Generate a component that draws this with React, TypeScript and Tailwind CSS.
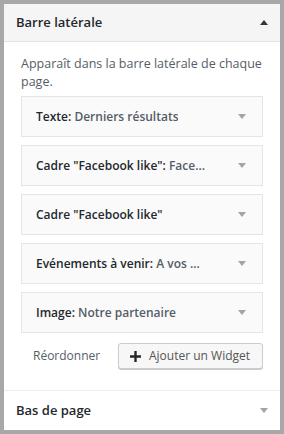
const widgets = [
  { name: "Texte", title: "Derniers résultats" },
  { name: 'Cadre "Facebook like"', title: "Face..." },
  { name: 'Cadre "Facebook like"', title: "" },
  { name: "Evénements à venir", title: "A vos ..." },
  { name: "Image", title: "Notre partenaire" },
];

function Caret({ up = false, dark = false }: { up?: boolean; dark?: boolean }) {
  return (
    <svg width="8" height="5" viewBox="0 0 8 5" className={up ? "" : "rotate-180"}>
      <path d="M0 5 L4 0 L8 5 Z" fill={dark ? "#32373c" : "#a0a5aa"} />
    </svg>
  );
}

export default function App() {
  return (
    <div className="h-[434px] w-[284px] bg-[#a8a8a8] p-[4px] font-['Open_Sans',sans-serif]">
      <div className="flex h-full flex-col bg-white">
        <div className="flex h-[38px] shrink-0 items-center justify-between border-b border-[#e2e4e7] bg-[#f5f5f5] pl-[12px] pr-[12px]">
          <span className="text-[13px] font-semibold text-[#23282d]">Barre latérale</span>
          <Caret up dark />
        </div>

        <div className="flex flex-col px-[17px] pt-[13px] pb-[21px]">
          <p className="mb-[5px] text-[12.5px] leading-[18px] text-[#555d66]">
            Apparaît dans la barre latérale de chaque page.
          </p>
          <div className="flex flex-col gap-2">
            {widgets.map((w, i) => (
              <div
                key={i}
                className="flex h-[41px] items-center justify-between border border-[#e5e5e5] bg-[#fafafa] pl-[14px] pr-[16px]"
              >
                <span className="truncate text-[12px] font-semibold text-[#23282d]">
                  {w.name}
                  {w.title && (
                    <>
                      : <span className="text-[#555d66]">{w.title}</span>
                    </>
                  )}
                </span>
                <Caret />
              </div>
            ))}
          </div>
          <div className="mt-[10px] flex items-center justify-between pl-[12px]">
            <span className="text-[12px] text-[#555d66]">Réordonner</span>
            <button className="flex h-[26px] w-[145px] items-center gap-[8px] rounded-[3px] border border-[#cccccc] bg-[#f7f7f7] pl-[11px] text-[12px] text-[#555] shadow-[0_1px_0_#cccccc]">
              <svg width="11" height="11" viewBox="0 0 12 12">
                <path d="M4.7 0h2.6v4.7H12v2.6H7.3V12H4.7V7.3H0V4.7h4.7z" fill="#23282d" />
              </svg>
              Ajouter un Widget
            </button>
          </div>
        </div>

        <div className="flex flex-1 items-center justify-between border-t border-[#eeeeee] pl-[12px] pr-[12px]">
          <span className="text-[13px] font-semibold text-[#23282d]">Bas de page</span>
          <Caret />
        </div>
      </div>
    </div>
  );
}
